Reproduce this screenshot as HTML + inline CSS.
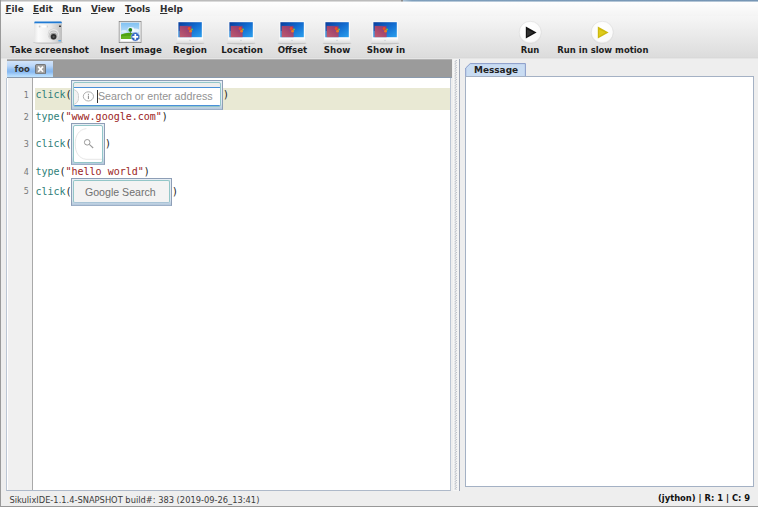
<!DOCTYPE html>
<html>
<head>
<meta charset="utf-8">
<title>SikuliX IDE</title>
<style>
html,body{margin:0;padding:0;}
body{width:758px;height:507px;overflow:hidden;position:relative;background:#eeeeee;font-family:"DejaVu Sans","Liberation Sans",sans-serif;color:#222;}
.abs{position:absolute;}
#win{position:absolute;left:0;top:0;width:758px;height:507px;overflow:hidden;background:#eeeeee;}
#topline{left:0;top:0;width:758px;height:2px;background:linear-gradient(to right,#bcbcbc 0,#bcbcbc 401px,#8a8a8a 401px,#8a8a8a 403px,#a9c0d4 403px,#7f9fbc 412px,#7595b4 758px);-webkit-mask-image:linear-gradient(#000 0,#000 55%,transparent 100%);mask-image:linear-gradient(#000 0,#000 55%,transparent 100%);}
#leftline{left:0;top:0;width:1px;height:507px;background:#9a9a9a;}
#menubar{left:1px;top:1px;width:757px;height:15px;background:linear-gradient(#ffffff,#f4f4f4);}
.menu{position:absolute;top:2.6px;font-weight:bold;font-size:8.9px;line-height:12px;color:#303030;white-space:nowrap;}
.menu u{text-decoration:underline;text-underline-offset:1px;}
#toolbar{left:1px;top:16px;width:757px;height:41px;background:linear-gradient(#f6f6f6,#dcdcdc);}
#tbshadow{left:1px;top:57px;width:757px;height:2.4px;background:linear-gradient(#d3d3d3,#ebebeb);}
.tbl{position:absolute;top:45px;font-weight:bold;font-size:8.67px;line-height:11px;color:#1c1c1c;white-space:nowrap;transform:translateX(-50%);}
.ico{position:absolute;}
#tabbar{left:7.3px;top:59.4px;width:444.4px;height:18.4px;background:#9b9b9b;border-top:1.2px solid #b2b2b2;box-sizing:border-box;}
#tabfoo{left:7px;top:61px;width:46px;height:16px;background:linear-gradient(#d2e4fa 0%,#bcd7f8 30%,#8ebdf2 55%,#86b8f1 68%,#aed6fb 88%,#bfe4ff 100%);}
#tabfoo span{position:absolute;left:7.5px;top:3.2px;font-weight:bold;font-size:8.5px;line-height:11px;color:#333;}
#editor{left:6.4px;top:78px;width:442.6px;height:412px;background:#fff;border-left:1.4px solid #bcc6d3;box-sizing:content-box;border-right:1.8px solid #bcc6d4;border-bottom:1.3px solid #aeb9c9;}
#gutter{left:8px;top:78px;width:24px;height:412px;background:#f0f0f0;border-right:1px solid #a9a9a9;}
.ln{position:absolute;left:7.9px;width:21px;text-align:right;font-size:8px;line-height:10px;color:#787878;}
#hl{left:35px;top:88.4px;width:415px;height:21.3px;background:#e9e9d4;}
.code{position:absolute;left:35.4px;font-family:"DejaVu Sans Mono","Liberation Mono",monospace;font-size:10px;line-height:12px;white-space:pre;color:#222;}
.kw{color:#2f7f7a;}
.st{color:#9b1c1c;}
.thumb{position:absolute;box-sizing:border-box;border:1px solid #8e9eb6;border-bottom-color:#9db0c8;background:linear-gradient(#e6eef5,#dbe6f0 80%,#b4c8dc);}
.thumb .in{position:absolute;left:1.4px;top:1.4px;right:1.4px;bottom:1.6px;box-sizing:border-box;border:1px solid #93c6c8;border-radius:2px;overflow:hidden;background:#fff;}
.ttext{position:absolute;font-family:"Liberation Sans","DejaVu Sans",sans-serif;font-size:10.7px;line-height:12px;white-space:nowrap;}
#split{left:453px;top:59.4px;width:7px;height:431.6px;background:#f5f5f5;border-right:0.8px solid #9fa7b6;box-sizing:border-box;}
#msgtab{left:466px;top:63px;width:59px;height:14px;background:#d6e4f5;border:1px solid #8fa8c8;border-bottom:none;box-sizing:border-box;border-radius:3px 0 0 0;}
#msgtxt{left:474px;top:64.9px;font-weight:bold;font-size:8.95px;line-height:11px;color:#222;white-space:nowrap;}
#msgpanel{left:465.4px;top:76.2px;width:288.6px;height:411px;background:#fff;border:1.3px solid #a4b1c4;border-left-width:1.6px;box-sizing:border-box;}
#status{left:1px;top:491px;width:757px;height:16px;background:#eeeeee;}
#stl{left:9.4px;top:494.5px;font-size:8.3px;line-height:10px;color:#3c3c3c;white-space:nowrap;}
#str{right:7.8px;top:493.3px;font-size:8.4px;line-height:10px;color:#111;font-weight:bold;white-space:nowrap;}
</style>
</head>
<body>
<div id="win">
  <div id="menubar" class="abs"></div>
  <div class="menu" style="left:5.5px"><u>F</u>ile</div>
  <div class="menu" style="left:33px"><u>E</u>dit</div>
  <div class="menu" style="left:62px"><u>R</u>un</div>
  <div class="menu" style="left:91px"><u>V</u>iew</div>
  <div class="menu" style="left:125px"><u>T</u>ools</div>
  <div class="menu" style="left:160px"><u>H</u>elp</div>

  <div id="toolbar" class="abs"></div>
  <div id="tbshadow" class="abs"></div>


  <svg width="0" height="0" style="position:absolute">
    <defs>
      <linearGradient id="gScr" x1="0" y1="0" x2="1" y2="1">
        <stop offset="0" stop-color="#083c9c"/><stop offset="0.5" stop-color="#126cd0"/><stop offset="1" stop-color="#2aa0ee"/>
      </linearGradient>
      <linearGradient id="gRed" x1="0" y1="1" x2="1" y2="0">
        <stop offset="0" stop-color="#d45a64"/><stop offset="0.6" stop-color="#b24064"/><stop offset="1" stop-color="#8c3a78"/>
      </linearGradient>
      <linearGradient id="gBase" x1="0" y1="0" x2="0" y2="1">
        <stop offset="0" stop-color="#ffffff"/><stop offset="1" stop-color="#dcdcdc"/>
      </linearGradient>
      <linearGradient id="gCam" x1="0" y1="0" x2="1" y2="0">
        <stop offset="0" stop-color="#e6e6e6"/><stop offset="0.15" stop-color="#fbfbfb"/><stop offset="0.6" stop-color="#e9e9e9"/><stop offset="1" stop-color="#bdbdbd"/>
      </linearGradient>
      <linearGradient id="gSky" x1="0" y1="0" x2="0" y2="1">
        <stop offset="0" stop-color="#7fc1f3"/><stop offset="1" stop-color="#e4f2fc"/>
      </linearGradient>
      <radialGradient id="gBtn" cx="0.5" cy="0.35" r="0.7">
        <stop offset="0" stop-color="#ffffff"/><stop offset="0.8" stop-color="#fbfbfb"/><stop offset="1" stop-color="#e8e8e8"/>
      </radialGradient>
      <radialGradient id="gLens" cx="0.5" cy="0.5" r="0.5">
        <stop offset="0" stop-color="#222"/><stop offset="0.38" stop-color="#3a3a3a"/><stop offset="0.45" stop-color="#8a8a8a"/><stop offset="0.7" stop-color="#c9c9c9"/><stop offset="0.85" stop-color="#f2f2f2"/><stop offset="1" stop-color="#a8a8a8"/>
      </radialGradient>
      <symbol id="mon" viewBox="0 0 30 24">
        <ellipse cx="15" cy="22.2" rx="14.4" ry="1.2" fill="#b8b8b8" opacity="0.7"/>
        <rect x="2.4" y="0.2" width="25.6" height="17" rx="0.6" fill="#fafafa"/>
        <path d="M2.4 16.8 H28 L28.4 21.2 Q28.4 22 27.6 22 H2.6 Q1.8 22 1.8 21.2 Z" fill="url(#gBase)"/>
        <rect x="3.4" y="1.2" width="23.4" height="15" fill="url(#gScr)"/>
        <rect x="3.4" y="10" width="1.4" height="6.2" fill="#6cc8f4" opacity="0.6"/>
        <rect x="4.7" y="4.9" width="11.9" height="11.3" fill="url(#gRed)" opacity="0.9"/>
        <circle cx="14.2" cy="7.6" r="1.5" fill="#f04a22"/>
        <circle cx="15.6" cy="10.2" r="1.4" fill="#f07a22"/>
        <circle cx="17" cy="8.4" r="0.9" fill="#7cc23a"/>
        <circle cx="13" cy="9.8" r="0.9" fill="#8a4a8a" opacity="0.7"/>
        <circle cx="15" cy="19.2" r="0.5" fill="#a8b4c0"/>
      </symbol>
    </defs>
  </svg>

  <!-- camera -->
  <svg class="ico" style="left:32px;top:20px" width="32" height="25" viewBox="0 0 32 25">
    <ellipse cx="16" cy="22.6" rx="15" ry="1.2" fill="#b4b4b4" opacity="0.75"/>
    <rect x="2" y="1.6" width="28" height="20.8" rx="0.8" fill="url(#gCam)"/>
    <path d="M2.7 1.4 H29.2 L30.2 3.6 H2.1 Z" fill="#1f7ad4"/>
    <rect x="2.1" y="3.5" width="28" height="0.6" fill="#dfe9f4"/>
    <rect x="6.8" y="5.6" width="1.6" height="1.8" fill="#c9c9c9"/>
    <rect x="10" y="5.4" width="4.2" height="2.2" rx="0.8" fill="#ffffff"/>
    <rect x="15" y="5.6" width="0.8" height="1.8" fill="#d0d0d0"/>
    <rect x="27" y="5.4" width="2" height="1.7" rx="0.4" fill="#3a3a3a"/>
    <rect x="26.4" y="20" width="2.6" height="1.4" fill="#5aaae8"/>
    <circle cx="21.6" cy="14.4" r="5.9" fill="#cfcfcf"/>
    <circle cx="21.6" cy="14.2" r="5.3" fill="#e9e9e9"/>
    <circle cx="21.6" cy="15" r="4.6" fill="#bdbdbd"/>
    <circle cx="21.6" cy="15.4" r="4" fill="#dedede"/>
    <circle cx="21.6" cy="16.2" r="3.4" fill="#9c9c9c"/>
    <circle cx="21.6" cy="16.8" r="2.7" fill="#2e2e2e"/>
    <circle cx="21.6" cy="16.8" r="1.1" fill="#5a5a5a"/>
  </svg>

  <!-- insert image -->
  <svg class="ico" style="left:118px;top:20px" width="25" height="24" viewBox="0 0 25 24">
    <rect x="1.2" y="1.4" width="21.8" height="21.2" fill="#ffffff" stroke="#808080" stroke-width="0.8"/>
    <rect x="2.2" y="2.4" width="19.8" height="19.2" fill="none" stroke="#e2e2e2" stroke-width="0.8"/>
    <rect x="3" y="2.7" width="18.3" height="16.4" fill="url(#gSky)"/>
    <ellipse cx="13" cy="9.4" rx="3.4" ry="2.4" fill="#ffffff" opacity="0.75"/>
    <ellipse cx="17.6" cy="10.6" rx="3.6" ry="2" fill="#ffffff" opacity="0.7"/>
    <ellipse cx="6" cy="11.4" rx="3" ry="1.4" fill="#ffffff" opacity="0.55"/>
    <path d="M3 14.6 Q8 12.4 13 12.9 Q17 13.3 21.3 15.4 V19.1 H3 Z" fill="#4fa312"/>
    <path d="M3 16.6 Q10 14.8 21.3 17.4 V19.1 H3 Z" fill="#6dba26" opacity="0.7"/>
    <circle cx="12.3" cy="9.9" r="1.9" fill="#1f7f1c"/>
    <rect x="12" y="11.2" width="0.7" height="2" fill="#4a6a2a"/>
    <circle cx="17.3" cy="16.8" r="4.2" fill="#2558b8" stroke="#a9bfe2" stroke-width="0.7"/>
    <circle cx="17.3" cy="16.2" r="3" fill="#3f7ad6" opacity="0.6"/>
    <path d="M17.3 13.9 V19.7 M14.4 16.8 H20.2" stroke="#ffffff" stroke-width="1.7" fill="none"/>
  </svg>

  <svg class="ico" style="left:174.5px;top:20.6px" width="30" height="24"><use href="#mon"/></svg>
  <svg class="ico" style="left:226.3px;top:20.6px" width="30" height="24"><use href="#mon"/></svg>
  <svg class="ico" style="left:276.5px;top:20.6px" width="30" height="24"><use href="#mon"/></svg>
  <svg class="ico" style="left:321.5px;top:20.6px" width="30" height="24"><use href="#mon"/></svg>
  <svg class="ico" style="left:370px;top:20.6px" width="30" height="24"><use href="#mon"/></svg>

  <!-- run -->
  <svg class="ico" style="left:517px;top:19px" width="26" height="26" viewBox="0 0 26 26">
    <circle cx="13.2" cy="13.5" r="11.3" fill="#d6d6d6" opacity="0.7"/>
    <circle cx="13.2" cy="13.2" r="10.9" fill="url(#gBtn)" stroke="#dcdcdc" stroke-width="0.5"/>
    <path d="M8.8 7.6 L19.6 13.6 L8.8 19.6 Z" fill="#141414"/>
    <path d="M10 10.4 L16.6 13.6 L10 17.2 Z" fill="#3a3a3a" opacity="0.7"/>
  </svg>
  <svg class="ico" style="left:589px;top:19px" width="26" height="26" viewBox="0 0 26 26">
    <circle cx="13.2" cy="13.5" r="11.3" fill="#d6d6d6" opacity="0.7"/>
    <circle cx="13.2" cy="13.2" r="10.9" fill="url(#gBtn)" stroke="#dcdcdc" stroke-width="0.5"/>
    <path d="M8.8 7.6 L19.6 13.6 L8.8 19.6 Z" fill="#cdb90f"/>
    <path d="M10 10.4 L16.6 13.6 L10 17.2 Z" fill="#e2d01e" opacity="0.8"/>
  </svg>

  <div class="tbl" style="left:49.5px">Take screenshot</div>
  <div class="tbl" style="left:131px">Insert image</div>
  <div class="tbl" style="left:190px">Region</div>
  <div class="tbl" style="left:242px">Location</div>
  <div class="tbl" style="left:292.5px">Offset</div>
  <div class="tbl" style="left:337px">Show</div>
  <div class="tbl" style="left:386px">Show in</div>
  <div class="tbl" style="left:530.1px;font-size:8.45px">Run</div>
  <div class="tbl" style="left:602.9px;font-size:8.45px">Run in slow motion</div>

  <div id="tabbar" class="abs"></div>
  <div id="tabfoo" class="abs"><span>foo</span>
    <svg class="abs" style="left:28px;top:2.8px" width="11.4" height="10.6" viewBox="0 0 11.4 10.6">
      <rect x="0.6" y="0.6" width="10" height="9.2" rx="0.8" fill="#a2a2a2" stroke="#666666" stroke-width="0.9"/>
      <path d="M3.2 2.6 L8 7.8 M8 2.6 L3.2 7.8" stroke="#ffffff" stroke-width="1.7" fill="none"/>
    </svg>
  </div>

  <div id="editor" class="abs"></div>
  <div class="abs" style="left:7.3px;top:76.8px;width:444.4px;height:1.1px;background:#8a9aad"></div>
  <div id="gutter" class="abs"></div>
  <div id="hl" class="abs"></div>

  <div class="ln" style="top:91.3px">1</div>
  <div class="ln" style="top:113.3px">2</div>
  <div class="ln" style="top:140.3px">3</div>
  <div class="ln" style="top:168px">4</div>
  <div class="ln" style="top:187.3px">5</div>

  <div class="code" style="top:88.8px"><span class="kw">click</span>(</div>
  <div class="code" style="top:88.8px;left:223px">)</div>
  <div class="code" style="top:110.8px"><span class="kw">type</span>(<span class="st">"www.google.com"</span>)</div>
  <div class="code" style="top:137.8px"><span class="kw">click</span>(</div>
  <div class="code" style="top:137.8px;left:105px">)</div>
  <div class="code" style="top:165.6px"><span class="kw">type</span>(<span class="st">"hello world"</span>)</div>
  <div class="code" style="top:185.8px"><span class="kw">click</span>(</div>
  <div class="code" style="top:185.8px;left:172px">)</div>


  <!-- thumbnail 1 : address bar -->
  <div class="thumb" style="left:71px;top:80px;width:152.4px;height:29.8px">
    <div class="in" style="background:#ededed;bottom:2px">
      <div class="abs" style="left:0;top:3.6px;right:0;height:16.9px;background:#ffffff;border-top:1px solid #4a90d9;border-bottom:1px solid #4a90d9;"></div>
      <div class="abs" style="left:-8px;top:5.5px;width:11px;height:14px;border-radius:7px;background:#f2f2f2;border:0.8px solid #d0d0d0;"></div>
      <svg class="abs" style="left:7.3px;top:6.8px" width="13" height="13" viewBox="0 0 13 13">
        <ellipse cx="6.4" cy="6.4" rx="5.1" ry="4.6" fill="none" stroke="#9a9a9a" stroke-width="0.8"/>
        <rect x="5.9" y="5.6" width="1" height="3.4" fill="#8a8a8a"/>
        <rect x="5.9" y="3.8" width="1" height="1.1" fill="#8a8a8a"/>
      </svg>
      <div class="abs" style="left:22.4px;top:6.4px;width:1px;height:13px;background:#333"></div>
      <div class="ttext" style="left:23.6px;top:7px;color:#929292">Search or enter address</div>
    </div>
  </div>

  <!-- thumbnail 2 : magnifier -->
  <div class="thumb" style="left:71px;top:123.2px;width:34px;height:41.4px">
    <div class="in" style="top:0.9px;bottom:0.4px">
      <svg class="abs" style="left:0;top:0" width="29" height="38" viewBox="0 0 29 38">
        <path d="M12.4 2.6 C4.5 3.5 1.2 10 1.2 18 C1.2 26 4.5 32.4 12 33.3 H28.6" fill="none" stroke="#e0e0e0" stroke-width="0.8"/>
        <circle cx="13.2" cy="16.3" r="2.8" fill="none" stroke="#9a9a9a" stroke-width="1"/>
        <path d="M15.3 18.4 L19.2 22" stroke="#9a9a9a" stroke-width="1.1" fill="none"/>
      </svg>
    </div>
  </div>

  <!-- thumbnail 3 : Google Search button -->
  <div class="thumb" style="left:71px;top:177.8px;width:101px;height:27.8px">
    <div class="in" style="background:#f3f3f3;bottom:1.8px;border-bottom-color:#a9c4d6">
      <div class="ttext" style="left:10.6px;top:4.4px;color:#707070;font-size:10.6px">Google Search</div>
    </div>
  </div>

  <div id="split" class="abs">
    <svg class="abs" style="left:1.4px;top:1px" width="4" height="430" viewBox="0 0 4 430">
      <defs><pattern id="grip" x="0" y="0" width="4" height="2.4" patternUnits="userSpaceOnUse">
        <path d="M3.1 0.2 L1.1 1.1 L1.1 2.2" stroke="#a9afb9" stroke-width="0.8" fill="none"/>
      </pattern></defs>
      <rect x="0" y="0" width="4" height="430" fill="url(#grip)"/>
    </svg>
  </div>
  <svg class="abs" style="left:464px;top:62px" width="64" height="16" viewBox="0 0 64 16">
    <path d="M1.7 14.8 V6 L6.2 1.6 H61.4 V14.8 Z" fill="#c9dcf2" stroke="#7f93c4" stroke-width="0.9"/>
    <path d="M2.4 14.8 H61" stroke="#c9dcf2" stroke-width="1"/>
  </svg>
  <div id="msgtxt" class="abs">Message</div>
  <div id="msgpanel" class="abs"></div>

  <div id="status" class="abs"></div>
  <div id="stl" class="abs">SikulixIDE-1.1.4-SNAPSHOT build#: 383 (2019-09-26_13:41)</div>
  <div id="str" class="abs">(jython) | R: 1 | C: 9</div>

  <div class="abs" style="left:0;top:505.6px;width:758px;height:1.4px;background:linear-gradient(#b4b4b4,#7c7c7c)"></div>
  <div id="topline" class="abs"></div>
  <div id="leftline" class="abs"></div>
</div>
</body>
</html>
